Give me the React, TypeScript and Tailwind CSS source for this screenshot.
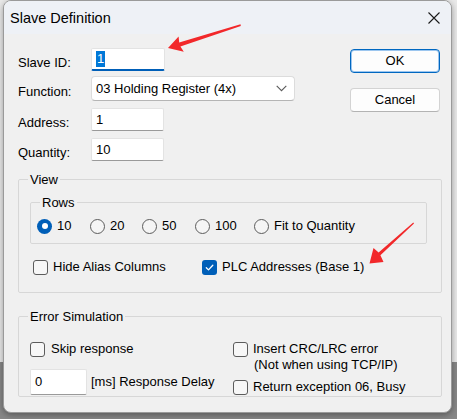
import React from 'react';

function Check({ checked }: { checked?: boolean }) {
  if (checked) {
    return (
      <span className="w-[15px] h-[15px] rounded-[3px] bg-[#005fb8] flex items-center justify-center shrink-0">
        <svg width="11" height="11" viewBox="0 0 11 11">
          <path d="M2.3 5.7l2.2 2.2 4.3-4.7" fill="none" stroke="#fff" strokeWidth="1.3" strokeLinecap="round" strokeLinejoin="round" />
        </svg>
      </span>
    );
  }
  return <span className="block w-[15px] h-[15px] rounded-[3px] border border-[#5c5c5c] bg-[#f7f7f7] shrink-0" />;
}

function Radio({ checked }: { checked?: boolean }) {
  if (checked) {
    return (
      <span className="w-[15px] h-[15px] rounded-full bg-[#005fb8] flex items-center justify-center shrink-0">
        <span className="w-[6px] h-[6px] rounded-full bg-white" />
      </span>
    );
  }
  return <span className="block w-[15px] h-[15px] rounded-full border border-[#5c5c5c] bg-[#f5f5f5] shrink-0" />;
}

function TextBox({ value, width, focused }: { value: string; width: string; focused?: boolean }) {
  return (
    <div
      className={`${width} h-[23px] bg-white flex items-center pl-[4px] rounded-[2px] border border-[#e3e3e3] ${
        focused ? 'border-b-2 border-b-[#005fb8]' : 'border-b-[#9a9a9a]'
      }`}
    >
      {focused ? <span className="bg-[#0078d7] text-white px-[1px] leading-[16px]">{value}</span> : value}
    </div>
  );
}

function FormRow({ label, children, className = '' }: { label: string; children: React.ReactNode; className?: string }) {
  return (
    <div className={`flex items-center ${className}`}>
      <div className="w-[73px] pt-[5px] leading-[15px]">{label}</div>
      {children}
    </div>
  );
}

const rows = [
  { label: '10', checked: true, w: 'w-[53px]' },
  { label: '20', w: 'w-[52px]' },
  { label: '50', w: 'w-[53px]' },
  { label: '100', w: 'w-[59px]' },
  { label: 'Fit to Quantity', w: '' },
];

export default function App() {
  return (
    <div className="relative w-[457px] h-[419px] overflow-hidden bg-[linear-gradient(to_bottom,#e9e9e9_0,#e9e9e9_362px,#878787_362px)] font-['Liberation_Sans',Arial,sans-serif] text-[13px] leading-[16px] text-black">
      <div className="ml-[3px] w-[449px] h-[413px] rounded-[8px] border border-[#9a9a9a] bg-[#f0f0f0] overflow-hidden shadow-[0_2px_6px_rgba(0,0,0,0.35)] flex flex-col">
        {/* title bar */}
        <div className="h-[33px] bg-[#eef1f6] flex items-center justify-between pl-[6px] pr-[11px] shrink-0">
          <span className="text-[14.5px] pt-[1px]">Slave Definition</span>
          <svg width="12" height="12" viewBox="0 0 12 12">
            <path d="M0.5 0.5l11 11M11.5 0.5l-11 11" stroke="#1a1a1a" strokeWidth="1.1" />
          </svg>
        </div>

        <div className="pl-[14px] pt-[14px]">
          {/* top: fields + buttons */}
          <div className="flex">
            <div className="w-[277px] flex flex-col">
              <FormRow label="Slave ID:">
                <TextBox value="1" width="w-[74px]" focused />
              </FormRow>
              <FormRow label="Function:" className="mt-[5px]">
                <div className="w-[204px] h-[25px] bg-white border border-[#dcdcdc] border-b-[#b5b5b5] rounded-[4px] flex items-center justify-between pl-[4px] pr-[7px]">
                  <span>03 Holding Register (4x)</span>
                  <svg width="11" height="7" viewBox="0 0 11 7">
                    <path d="M0.7 0.8l4.8 4.8 4.8-4.8" fill="none" stroke="#5a5a5a" strokeWidth="1.1" />
                  </svg>
                </div>
              </FormRow>
              <FormRow label="Address:" className="mt-[7px]">
                <TextBox value="1" width="w-[73px]" />
              </FormRow>
              <FormRow label="Quantity:" className="mt-[7px]">
                <TextBox value="10" width="w-[73px]" />
              </FormRow>
            </div>
            <div className="ml-[55px] w-[90px] flex flex-col pt-[1px]">
              <button className="h-[24px] rounded-[4px] bg-[#fdfdfd] border border-[#0067c0] shadow-[inset_0_0_0_1px_#9cc6ef] flex items-center justify-center">
                OK
              </button>
              <button className="mt-[15px] h-[24px] rounded-[4px] bg-[#fdfdfd] border border-[#d3d3d3] border-b-[#b3b3b3] flex items-center justify-center">
                Cancel
              </button>
            </div>
          </div>

          {/* View group */}
          <fieldset className="mt-[11px] w-[424px] border border-[#d7d7d7] rounded-[2px]">
            <legend className="ml-[9px] px-[2px] leading-[15px]">View</legend>
            <div className="px-[11px] pb-[17px]">
              <fieldset className="mt-[8px] w-[397px] border border-[#d7d7d7] rounded-[2px]">
                <legend className="ml-[9px] px-[2px] leading-[15px]">Rows</legend>
                <div className="flex items-center h-[16px] pl-[6px] mt-[8px] mb-[9px]">
                  {rows.map((r) => (
                    <div key={r.label} className={`flex items-center gap-[5px] ${r.w}`}>
                      <Radio checked={r.checked} />
                      <span>{r.label}</span>
                    </div>
                  ))}
                </div>
              </fieldset>
              <div className="mt-[15px] ml-[3px] flex items-center h-[16px]">
                <div className="w-[169px] flex items-center gap-[5px]">
                  <Check />
                  <span>Hide Alias Columns</span>
                </div>
                <div className="flex items-center gap-[5px]">
                  <Check checked />
                  <span>PLC Addresses (Base 1)</span>
                </div>
              </div>
            </div>
          </fieldset>

          {/* Error Simulation group */}
          <fieldset className="mt-[16px] w-[424px] border border-[#d7d7d7] rounded-[2px]">
            <legend className="ml-[9px] px-[2px] leading-[15px]">Error Simulation</legend>
            <div className="flex px-[11px] pt-[17px] pb-[1px]">
              <div className="w-[203px] flex flex-col">
                <div className="flex items-center gap-[6px] h-[16px]">
                  <Check />
                  <span>Skip response</span>
                </div>
                <div className="mt-[12px] flex items-center">
                  <div className="w-[57px] h-[26px] bg-white border border-[#e3e3e3] border-b-[#9a9a9a] rounded-[2px] flex items-center pl-[4px]">
                    0
                  </div>
                  <span className="ml-[4px]">[ms] Response Delay</span>
                </div>
              </div>
              <div className="flex flex-col">
                <div className="flex items-start gap-[5px]">
                  <span className="mt-[1px] flex">
                    <Check />
                  </span>
                  <div className="leading-[16px]">
                    <div>Insert CRC/LRC error</div>
                    <div className="pl-[1px]">(Not when using TCP/IP)</div>
                  </div>
                </div>
                <div className="mt-[6px] flex items-center gap-[5px] h-[16px]">
                  <Check />
                  <span>Return exception 06, Busy</span>
                </div>
              </div>
            </div>
          </fieldset>
        </div>
      </div>

      {/* annotation arrows */}
      <svg className="absolute inset-0 pointer-events-none" width="457" height="419" viewBox="0 0 457 419">
        <polygon
          points="240.5,24.2 179.2,42.4 178.6,36.4 168,48 183.8,51.8 180.4,46.6 240.8,26"
          fill="#f2282a"
        />
        <polygon
          points="413.3,222.5 378.6,252.6 373.5,248 369.5,263.5 383.5,262 380.4,255.3 414,223.6"
          fill="#f2282a"
        />
      </svg>
    </div>
  );
}
